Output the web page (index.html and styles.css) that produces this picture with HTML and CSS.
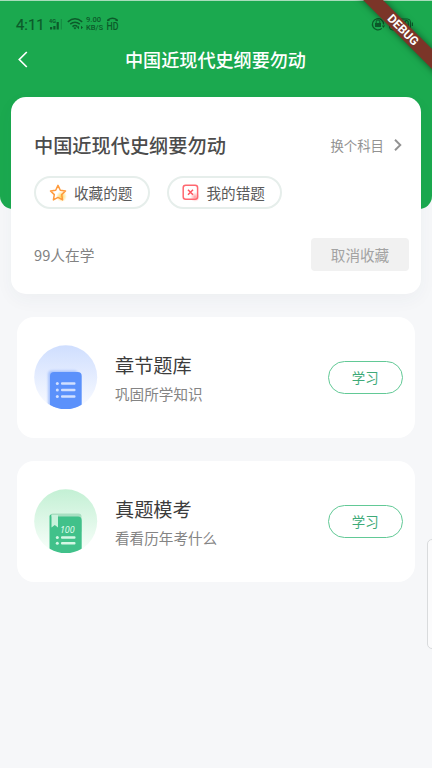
FILE: index.html
```html
<!DOCTYPE html>
<html lang="zh-CN">
<head>
<meta charset="utf-8">
<title>中国近现代史纲要勿动</title>
<link rel="stylesheet" href="styles.css">
</head>
<body>
<div class="screen">
  <header class="top">
    <div class="status">
      <span class="clock">4:11</span>
      <svg class="signal" width="14" height="14" viewBox="0 0 14 14"><text x="0" y="6" class="tiny">4G</text><path d="M1 10h2.200v2.500H1zM4.300 9h2.200v3.500H4.300zM7.600 5h2.200v7.500H7.600z"/><path d="M11.800 2h1v10.500h-1z" opacity=".4"/></svg>
      <svg class="wifi" width="17" height="14" viewBox="0 0 17 14"><g fill="none" stroke="#0c5a2a" stroke-width="1.500"><path d="M.8 4.800Q8 -1.200 15.200 4.800M3.200 7.200Q8 3.300 12.800 7.200M5.500 9.600Q8 7.600 10.500 9.600"/></g><path d="M6.300 10.800Q8 9.500 9.500 10.800L8 12.600zM10 10.500l2-1.700v3.500zM16 10.500l-2-1.700v3.500z"/></svg>
      <span class="speed"><b>9.00</b><b>KB/S</b></span>
      <svg class="hd" width="14" height="17" viewBox="0 0 14 17"><path d="M1.300 5.300Q.5 4 1.500 3.200Q6.500 -.3 11.500 3.200Q12.500 4 11.700 5.300L9.300 4.700V3.400Q6.500 2.400 3.700 3.400V4.700z"/><text x=".5" y="14" class="hdtext" textLength="12" lengthAdjust="spacingAndGlyphs">HD</text></svg>
      <svg class="power" width="44" height="16" viewBox="0 0 44 16"><g fill="none" stroke="#0c5a2a"><path d="M10.800 12.400A5.600 5.600 0 1 1 12.600 8.500" stroke-width="1.200"/><path d="M5.200 7V5.700a1.800 1.800 0 0 1 3.600 0V7" stroke-width="1"/><rect x="18.500" y="3" width="21" height="11" rx="3"/></g><path d="M4 7h6v4H4zM11 9.500h3.200l-2 2.500zM40.800 6.500h1.200v3.500h-1.200z"/><text x="27" y="12" class="level">90</text></svg>
    </div>
    <div class="nav">
      <svg class="back" width="10" height="17" viewBox="0 0 10 17"><path d="M8.800 1L1.300 8.500L8.800 16" fill="none" stroke="#fff" stroke-width="1.700"/></svg>
      <h1>中国近现代史纲要勿动</h1>
    </div>
  </header>
  <main>
    <section class="subject">
      <div class="row">
        <h2>中国近现代史纲要勿动</h2>
        <span class="switch">换个科目<svg width="8" height="12" viewBox="0 0 8 12"><path d="M1 .8L6.300 6L1 11.200" fill="none" stroke="#929292" stroke-width="1.900"/></svg></span>
      </div>
      <div class="pills">
        <span class="pill"><svg width="18" height="18" viewBox="0 0 18 18"><defs><radialGradient id="glow"><stop offset="0" stop-color="#ffd04a"/><stop offset="1" stop-color="#ffd95c" stop-opacity="0"/></radialGradient></defs><circle cx="12.500" cy="12.500" r="5.500" fill="url(#glow)"/><path d="M9 1.400l2.300 4.800 5.200.7-3.800 3.700.9 5.300L9 13.400l-4.600 2.500.9-5.300L1.500 6.900l5.200-.7z" fill="none" stroke="#ff9b3d" stroke-width="1.500" stroke-linejoin="round"/></svg>收藏的题</span>
        <span class="pill"><svg width="18" height="18" viewBox="0 0 18 18"><defs><radialGradient id="pink"><stop offset="0" stop-color="#ff9a9e"/><stop offset="1" stop-color="#ffb4b7" stop-opacity="0"/></radialGradient></defs><circle cx="13" cy="13" r="5" fill="url(#pink)"/><rect x="1.200" y="1.200" width="14.400" height="14" rx="2.500" fill="none" stroke="#ff6870" stroke-width="1.500"/><path d="M6 5.800l5 5M11 5.800l-5 5" stroke="#ff5560" stroke-width="1.500"/></svg>我的错题</span>
      </div>
      <div class="row foot">
        <span class="count">99人在学</span>
        <span class="cancel">取消收藏</span>
      </div>
    </section>
    <section class="entry">
      <svg class="badge" width="64" height="64" viewBox="0 0 64 64"><defs><linearGradient id="sky" x2="0" y2="1"><stop stop-color="#cfdefe"/><stop offset="1" stop-color="#fbfcff"/></linearGradient><clipPath id="disc"><ellipse cx="31.700" cy="32.300" rx="31.500" ry="32"/></clipPath><filter id="soft"><feGaussianBlur stdDeviation="1"/></filter></defs><g clip-path="url(#disc)"><path d="M0 0h64v65H0z" fill="url(#sky)"/><rect x="14" y="25.500" width="30" height="42" rx="4" fill="#a9c4fd" filter="url(#soft)"/><rect x="16" y="27" width="31.700" height="45" rx="4" fill="#5b91fb"/></g><g fill="#d2e0ff"><circle cx="23.300" cy="38.500" r="1.500"/><circle cx="23.300" cy="45" r="1.500"/><circle cx="23.300" cy="51.500" r="1.500"/><rect x="27" y="37.200" width="14.500" height="2.600" rx="1"/><rect x="27" y="43.700" width="14.500" height="2.600" rx="1"/><rect x="27" y="50.200" width="14.500" height="2.600" rx="1"/></g></svg>
      <div class="info"><h3>章节题库</h3><p>巩固所学知识</p></div>
      <span class="study">学习</span>
    </section>
    <section class="entry">
      <svg class="badge" width="64" height="64" viewBox="0 0 64 64"><defs><linearGradient id="mint" x2="0" y2="1"><stop stop-color="#c3f0d4"/><stop offset="1" stop-color="#fbfffc"/></linearGradient></defs><g clip-path="url(#disc)"><path d="M0 0h64v65H0z" fill="url(#mint)"/><rect x="16" y="24.500" width="31.500" height="20" rx="3" fill="#a9dfc2"/><path d="M15.500 27q0-1.500 2-1.500V27.500H44q3.700 0 3.700 4V68H15.500z" fill="#41c18a"/></g><path d="M17.500 26h6.500v12.500l-3.200-2.500-3.300 2.500z" fill="#c9f2dc"/><text x="26" y="43.500" class="hundred" textLength="14.500" lengthAdjust="spacingAndGlyphs">100</text><g fill="#d5f7e5"><circle cx="23.300" cy="48.500" r="1.500"/><circle cx="23.300" cy="54.300" r="1.500"/><rect x="27" y="47.200" width="14.500" height="2.600" rx="1"/><rect x="27" y="53" width="14.500" height="2.600" rx="1"/></g></svg>
      <div class="info"><h3>真题模考</h3><p>看看历年考什么</p></div>
      <span class="study">学习</span>
    </section>
  </main>
  <div class="handle"></div>
  <div class="debug">DEBUG</div>
</div>
</body>
</html>
```
FILE: styles.css
```css
* { box-sizing: border-box; margin: 0; padding: 0; }
body { font-family: "Noto Sans CJK SC", sans-serif; background: #f6f7f9; }
.screen { position: relative; width: 432px; height: 768px; overflow: hidden; background: #f6f7f9; }
.top { height: 209px; background: #1ba94f; border-top: 1px solid #a9dcbb; border-radius: 0 0 13px 13px; }
.status { display: flex; align-items: center; height: 28px; margin-top: 9px; padding: 0 17px 0 16px; fill: #0c5a2a; color: #0c5a2a; font-family: Roboto, sans-serif; }
.clock { width: 28px; padding-top: 2px; font-size: 14.8px; font-weight: 400; -webkit-text-stroke: .2px #0c5a2a; line-height: 28px; white-space: nowrap; }
.signal { margin-left: 4.5px; }
.wifi { margin-left: 4.5px; }
.speed { display: flex; flex-direction: column; width: 18px; margin-left: 2px; font-size: 7.6px; line-height: 8px; }
.speed b { font-weight: 500; white-space: nowrap; }
.hd { margin-left: 2px; overflow: visible; }
.tiny { font-size: 5.5px; font-weight: 700; }
.hdtext { font-size: 11.5px; font-weight: 500; }
.power { margin-left: auto; }
.level { font-size: 10px; font-weight: 500; }
.nav { position: relative; display: flex; align-items: center; justify-content: center; height: 44px; }
.back { position: absolute; left: 18px; top: 13px; }
h1 { margin: -2px 1px 0 0; color: #fff; font-size: 18.1px; font-weight: 500; line-height: 26px; }
main { padding: 0 17px; margin-top: -112px; position: relative; }
.subject { height: 197px; margin: 0 -6px; padding: 33px 12px 0 23px; border-radius: 15px; background: #fff; box-shadow: 0 6px 18px rgba(40, 60, 90, .045); }
.row { display: flex; align-items: center; justify-content: space-between; height: 30px; }
h2 { font-size: 19.2px; line-height: 30px; font-weight: 500; color: #4c4c4c; }
.switch { display: flex; align-items: center; gap: 10px; padding-right: 7px; font-size: 13.4px; line-height: 20px; color: #929292; }
.pills { display: flex; gap: 17px; margin-top: 16px; }
.pill { display: flex; align-items: center; gap: 7px; width: 115.5px; height: 33px; padding-left: 13px; border: 2px solid #e6eeeb; border-radius: 17px; font-size: 14.6px; line-height: 20px; color: #5a5a5a; }
.foot { height: 33px; margin-top: 29px; }
.count { font-size: 14.7px; color: #828282; line-height: 22px; }
.cancel { width: 98px; height: 33px; border-radius: 4px; background: #f1f1f1; text-align: center; font-size: 14.6px; line-height: 33px; color: #a3a3a3; }
.entry { display: flex; align-items: center; height: 121px; margin-top: 23px; padding: 0 12px 0 17px; border-radius: 17px; background: #fff; }
.badge { margin-top: -2px; }
.info { flex: 1; margin-left: 17px; padding-top: 2px; }
h3 { font-size: 19.2px; line-height: 30px; font-weight: 400; color: #3c3c3c; }
.info p { font-size: 14.6px; line-height: 28px; color: #848484; }
.study { width: 75.5px; height: 33px; border: 1.500px solid #62c996; border-radius: 17px; text-align: center; font-size: 13.4px; line-height: 31px; color: #3eaa78; }
.hundred { font-family: "Open Sans", sans-serif; font-size: 9px; font-style: italic; fill: #e4fff0; }
.handle { position: absolute; left: 427px; top: 539px; width: 12px; height: 110px; border: 1px solid #d9dbdd; border-radius: 5px; background: #fbfbfc; }
.debug { position: absolute; left: 343px; top: 23px; width: 120px; height: 14px; transform: rotate(45deg); background: #7b3528; box-shadow: 0 0 7px rgba(0, 0, 0, .5); color: #fff; font: 700 12px/14px Roboto, sans-serif; text-align: center; }
```
